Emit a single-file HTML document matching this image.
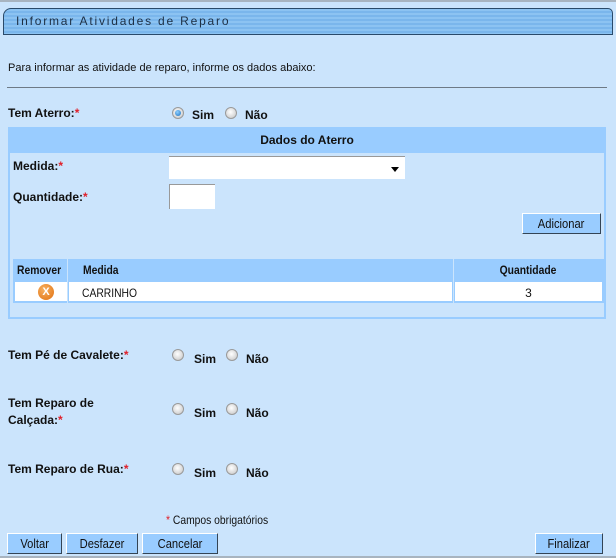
<!DOCTYPE html>
<html><head><meta charset="utf-8"><style>
*{margin:0;padding:0;box-sizing:border-box}
body{width:616px;height:558px;background:#cbe4fc;font-family:"Liberation Sans",Arial,sans-serif;font-size:12px;color:#111;position:relative;overflow:hidden}
.a{position:absolute;white-space:nowrap}
.b{font-weight:bold}
.r{color:#e0202a}
.rad{position:absolute;width:12px;height:12px;border-radius:50%;background:radial-gradient(circle at 45% 40%,#fff,#d4d4d4 70%,#aaa);border:1px solid #9a9a9a}
.rad.on::after{content:"";position:absolute;left:2px;top:2px;width:6px;height:6px;border-radius:50%;background:radial-gradient(circle at 40% 35%,#8fd0ff,#1a6fc0)}
.btn{position:absolute;height:21px;background:#99ccff;border:1px solid #fff;border-right-color:#345;border-bottom-color:#345;font-size:13px;text-align:center;line-height:19px;color:#111}
.btn span{display:inline-block;transform:scaleX(0.86)}
.n{display:inline-block;transform:scaleX(0.86);transform-origin:left}
</style></head><body>
<div class="a" style="left:0;top:0;width:616px;height:2px;background:#a8b4c0"></div>
<div class="a" style="left:3px;top:8px;width:610px;height:27px;border:1px solid #2a4a6a;border-radius:8px 5px 0 0;background:repeating-linear-gradient(#8cc3f2 0 2px,#7ab6ec 2px 4px)"></div>
<div class="a" style="left:16px;top:14px;font-size:12px;letter-spacing:1.8px;color:#1d2f44">Informar Atividades de Reparo</div>
<div class="a" style="left:8px;top:62px;font-size:11px">Para informar as atividade de reparo, informe os dados abaixo:</div>
<div class="a" style="left:7px;top:87px;width:600px;height:1px;background:#6e7a86"></div>

<div class="a b" style="left:8px;top:106px">Tem Aterro:<span class="r">*</span></div>
<div class="rad on" style="left:172px;top:107px"></div><div class="a b" style="left:192px;top:108px">Sim</div>
<div class="rad" style="left:225px;top:107px"></div><div class="a b" style="left:245px;top:108px">Não</div>

<div class="a" style="left:8px;top:127px;width:598px;height:192px;border:2px solid #99ccff;background:#cbe4fc"></div>
<div class="a b" style="left:10px;top:129px;width:594px;height:24px;background:#99ccff;text-align:center;line-height:22px">Dados do Aterro</div>
<div class="a b" style="left:13px;top:159px">Medida:<span class="r">*</span></div>
<div class="a" style="left:169px;top:156px;width:236px;height:23px;background:#fff;border-top:1px solid #999"></div>
<div class="a" style="left:391px;top:167px;width:0;height:0;border-left:4px solid transparent;border-right:4px solid transparent;border-top:5px solid #000"></div>
<div class="a b" style="left:13px;top:190px">Quantidade:<span class="r">*</span></div>
<div class="a" style="left:169px;top:184px;width:46px;height:25px;background:#fff;border-top:1px solid #999;border-left:1px solid #999"></div>
<div class="btn" style="left:522px;top:213px;width:79px"><span>Adicionar</span></div>

<div class="a" style="left:13px;top:259px;width:591px;height:44px;background:#99ccff"></div>
<div class="a b" style="left:17px;top:263px"><span class="n">Remover</span></div>
<div class="a b" style="left:83px;top:263px"><span class="n">Medida</span></div>
<div class="a" style="left:453px;top:259px;width:1px;height:44px;background:#cbe4fc"></div>
<div class="a" style="left:67px;top:259px;width:1px;height:44px;background:#cbe4fc"></div>
<div class="a b" style="left:454px;top:263px;width:148px;text-align:center"><span style="display:inline-block;transform:scaleX(0.86)">Quantidade</span></div>
<div class="a" style="left:15px;top:282px;width:52px;height:19px;background:#fff"></div>
<div class="a" style="left:69px;top:282px;width:383px;height:19px;background:#fff"></div>
<div class="a" style="left:455px;top:282px;width:147px;height:19px;background:#fff"></div>
<div class="a" style="left:38px;top:284px;width:16px;height:16px;border-radius:50%;background:radial-gradient(circle at 40% 35%,#f7b060,#e07010);color:#fff;font-size:11px;font-weight:bold;text-align:center;line-height:16px">X</div>
<div class="a" style="left:82px;top:286px"><span class="n">CARRINHO</span></div>
<div class="a" style="left:455px;top:286px;width:147px;text-align:center">3</div>

<div class="a b" style="left:8px;top:348px">Tem Pé de Cavalete:<span class="r">*</span></div>
<div class="rad" style="left:172px;top:349px"></div><div class="a b" style="left:194px;top:352px">Sim</div>
<div class="rad" style="left:226px;top:349px"></div><div class="a b" style="left:246px;top:352px">Não</div>

<div class="a b" style="left:8px;top:395px;line-height:17px">Tem Reparo de<br>Calçada:<span class="r">*</span></div>
<div class="rad" style="left:172px;top:403px"></div><div class="a b" style="left:194px;top:406px">Sim</div>
<div class="rad" style="left:226px;top:403px"></div><div class="a b" style="left:246px;top:406px">Não</div>

<div class="a b" style="left:8px;top:462px">Tem Reparo de Rua:<span class="r">*</span></div>
<div class="rad" style="left:172px;top:463px"></div><div class="a b" style="left:194px;top:466px">Sim</div>
<div class="rad" style="left:226px;top:463px"></div><div class="a b" style="left:246px;top:466px">Não</div>

<div class="a" style="left:166px;top:513px;font-size:12px"><span class="n"><span class="r">*</span> Campos obrigatórios</span></div>
<div class="btn" style="left:7px;top:533px;width:55px"><span>Voltar</span></div>
<div class="btn" style="left:66px;top:533px;width:72px"><span>Desfazer</span></div>
<div class="btn" style="left:142px;top:533px;width:76px"><span>Cancelar</span></div>
<div class="btn" style="left:535px;top:533px;width:68px"><span>Finalizar</span></div>
<div class="a" style="left:0;top:556px;width:616px;height:2px;background:#a8b4c0"></div>
</body></html>
